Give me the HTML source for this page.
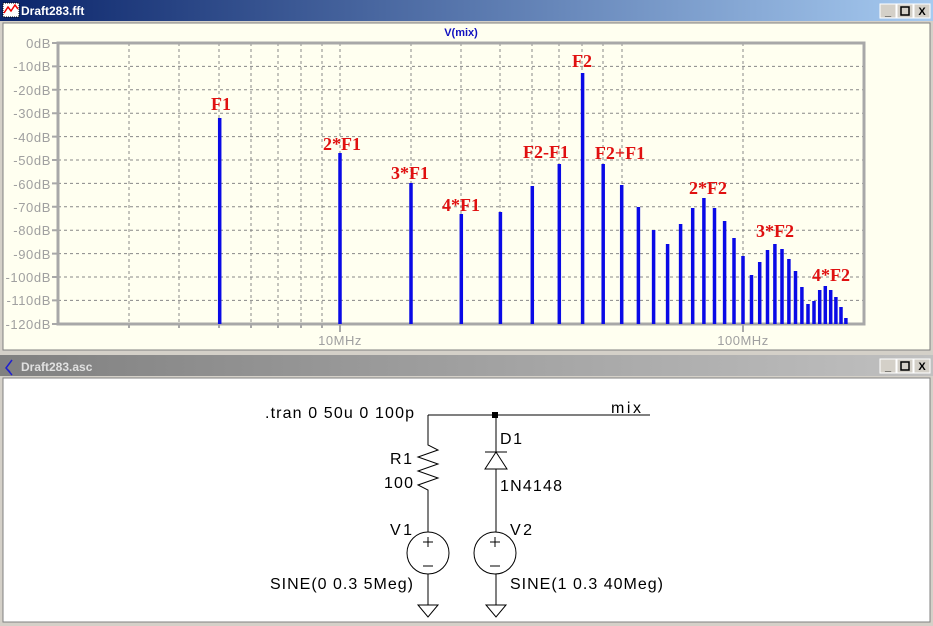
<!DOCTYPE html>
<html><head><meta charset="utf-8"><style>
html,body{margin:0;padding:0;background:#d4d0c8;}
svg{display:block}
</style></head><body>
<svg width="933" height="626" xmlns="http://www.w3.org/2000/svg" font-family="Liberation Sans, sans-serif">
<defs>
<linearGradient id="ta" x1="0" x2="1"><stop offset="0" stop-color="#0a246a"/><stop offset="1" stop-color="#a6caf0"/></linearGradient>
<linearGradient id="ti" x1="0" x2="1"><stop offset="0" stop-color="#808080"/><stop offset="1" stop-color="#c0c0c0"/></linearGradient>
</defs>
<rect width="933" height="626" fill="#d4d0c8"/>
<rect x="0" y="0" width="933" height="21" fill="url(#ta)"/>
<rect x="3" y="3" width="16" height="14" fill="#fff" stroke="#000" stroke-dasharray="1 1"/>
<path d="M4 13 L8 7 L11 11 L15 5 L18 9" stroke="#e00" stroke-width="1.5" fill="none"/>
<text x="21" y="15" font-size="12" font-weight="bold" fill="#fff">Draft283.fft</text>
<g font-size="11" font-weight="bold" text-anchor="middle">
<rect x="880" y="4" width="16" height="14" fill="#d4d0c8" stroke="#fff"/><text x="888" y="15">_</text>
<rect x="897" y="4" width="16" height="14" fill="#d4d0c8" stroke="#fff"/><rect x="901" y="7" width="8" height="8" fill="none" stroke="#000" stroke-width="1.5"/>
<rect x="914" y="4" width="16" height="14" fill="#d4d0c8" stroke="#fff"/><text x="922" y="15">X</text>
</g>
<rect x="3" y="23" width="927" height="327" fill="#fffff0" stroke="#808080"/>
<text x="461" y="36" font-size="11" font-weight="bold" fill="#1010c0" text-anchor="middle">V(mix)</text>
<g stroke="#888" stroke-width="1" stroke-dasharray="3 3">
<path d="M58 66.4H864M58 89.8H864M58 113.2H864M58 136.6H864M58 160H864M58 183.4H864M58 206.8H864M58 230.2H864M58 253.6H864M58 277H864M58 300.4H864"/>
<path d="M129 43V324M179 43V324M219 43V324M251 43V324M278 43V324M301 43V324M322 43V324M340 43V324M411 43V324M461 43V324M500 43V324M532 43V324M559 43V324M582 43V324M603 43V324M622 43V324M743 43V324"/>
</g>
<rect x="58" y="43" width="806" height="281" fill="none" stroke="#a8a8a8" stroke-width="3"/>
<g stroke="#a8a8a8" stroke-width="2">
<path d="M52 43H58M52 66.4H58M52 89.8H58M52 113.2H58M52 136.6H58M52 160H58M52 183.4H58M52 206.8H58M52 230.2H58M52 253.6H58M52 277H58M52 300.4H58M52 324H58"/>
<path d="M129 324v4M179 324v4M219 324v4M251 324v4M278 324v4M301 324v4M322 324v4M340 324v8M743 324v8"/>
</g>
<g font-size="13" fill="#a0a0a0" text-anchor="end" letter-spacing="0.6">
<text x="51" y="48">0dB</text><text x="51" y="71">-10dB</text><text x="51" y="95">-20dB</text><text x="51" y="118">-30dB</text><text x="51" y="142">-40dB</text><text x="51" y="165">-50dB</text><text x="51" y="189">-60dB</text><text x="51" y="212">-70dB</text><text x="51" y="235">-80dB</text><text x="51" y="259">-90dB</text><text x="51" y="282">-100dB</text><text x="51" y="305">-110dB</text><text x="51" y="329">-120dB</text>
</g>
<g font-size="13" fill="#a0a0a0" text-anchor="middle" letter-spacing="0.5"><text x="340" y="345">10MHz</text><text x="743" y="345">100MHz</text></g>
<g stroke="#0a0ae6" stroke-width="3.5">
<path d="M219.7 118V324M340 153V324M411 183V324M461.3 214V324M500.4 212V324M532.3 186V324M559.3 164V324M582.6 73V324M603.2 164V324M621.7 185V324M638.4 207V324M653.6 230V324M667.6 244V324M680.6 224V324M692.7 208V324M703.9 198V324M714.5 208V324M724.6 221V324M734 238V324M743 256V324M751.5 275V324M759.7 262V324M767.5 250V324M774.9 244V324M782 249V324M788.9 259V324M795.5 271V324M801.9 287V324M808 304V324M814 301V324M819.7 290V324M825.3 286V324M830.7 290V324M835.9 297V324M841 307V324M845.9 318V324"/>
</g>
<g font-family="Liberation Serif, serif" font-weight="bold" font-size="18" fill="#e01010" text-anchor="middle">
<text x="221" y="110">F1</text><text x="342" y="150">2*F1</text><text x="410" y="179">3*F1</text><text x="461" y="211">4*F1</text>
<text x="546" y="158">F2-F1</text><text x="620" y="159">F2+F1</text><text x="582" y="67">F2</text><text x="708" y="194">2*F2</text><text x="775" y="237">3*F2</text><text x="831" y="281">4*F2</text>
</g>
<rect x="0" y="355" width="933" height="21" fill="url(#ti)"/>
<path d="M12 360 L6 368 L12 375 M6 368 L10 372" stroke="#2020d0" stroke-width="1.5" fill="none"/>
<text x="21" y="371" font-size="12" font-weight="bold" fill="#e0e0e0">Draft283.asc</text>
<g font-size="11" font-weight="bold" text-anchor="middle">
<rect x="880" y="359" width="16" height="14" fill="#d4d0c8" stroke="#fff"/><text x="888" y="370">_</text>
<rect x="897" y="359" width="16" height="14" fill="#d4d0c8" stroke="#fff"/><rect x="901" y="362" width="8" height="8" fill="none" stroke="#000" stroke-width="1.5"/>
<rect x="914" y="359" width="16" height="14" fill="#d4d0c8" stroke="#fff"/><text x="922" y="370">X</text>
</g>
<rect x="3" y="378" width="927" height="244" fill="#fff" stroke="#808080"/>
<g stroke="#000" stroke-width="1" fill="none">
<path d="M428 415H650M428 415V445L438 450L418 457L438 464L418 471L438 478L418 485L428 490V532M428 574V605M418 605H438L428 617Z"/>
<path d="M496 415V452M485 452H507M496 452L485 469H507Z M496 469V532M496 574V605M486 605H506L496 617Z"/>
<circle cx="428" cy="553" r="21"/><circle cx="495" cy="553" r="21"/>
<path d="M428 537v10M423 542h10M423 566h10M495 537v10M490 542h10M490 566h10"/>
</g>
<rect x="492" y="412" width="6" height="6" fill="#000"/>
<g font-size="16" fill="#000">
<text x="265" y="418" textLength="149">.tran 0 50u 0 100p</text>
<text x="611" y="413" textLength="30">mix</text>
<text x="390" y="464" textLength="22">R1</text><text x="384" y="488" textLength="29">100</text>
<text x="500" y="444" textLength="22">D1</text><text x="500" y="491" textLength="62">1N4148</text>
<text x="390" y="535" textLength="22">V1</text><text x="510" y="535" textLength="22">V2</text>
<text x="270" y="589" textLength="143">SINE(0 0.3 5Meg)</text><text x="510" y="589" textLength="153">SINE(1 0.3 40Meg)</text>
</g>
</svg>
</body></html>
